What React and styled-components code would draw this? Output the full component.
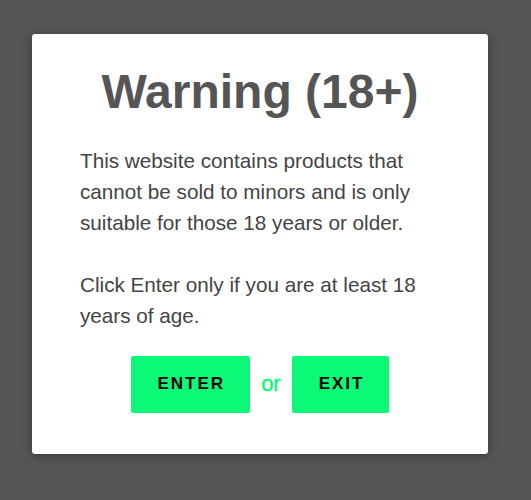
import React from "react";
import styled, { createGlobalStyle } from "styled-components";

const GlobalStyle = createGlobalStyle`
  html, body {
    margin: 0;
    padding: 0;
    background: #555555;
  }
  body {
    font-family: "Liberation Sans", Arial, Helvetica, sans-serif;
  }
`;

const Overlay = styled.div`
  min-height: 100vh;
  padding-top: 34px;
  padding-left: 32px;
  box-sizing: border-box;
`;

const Modal = styled.div`
  width: 456px;
  box-sizing: border-box;
  background: #fff;
  border-radius: 3px;
  box-shadow: 0 2px 10px rgba(0, 0, 0, 0.35);
  padding: 29px 48px 41px;
  display: flex;
  flex-direction: column;
`;

const Title = styled.h1`
  margin: 0 0 24px;
  font-size: 48px;
  line-height: 1.2;
  font-weight: 700;
  color: #555;
  text-align: center;
`;

const Text = styled.p`
  margin: 0 0 31px;
  font-size: 20.7px;
  line-height: 31px;
  color: #444;
  &:last-of-type {
    margin-bottom: 25px;
  }
`;

const Actions = styled.div`
  display: flex;
  justify-content: center;
  align-items: center;
  gap: 11px;
`;

const Button = styled.button`
  height: 57px;
  padding: 0 25px 0 27px;
  border: 0;
  border-radius: 2px;
  background: #0bf977;
  color: #000;
  font-family: inherit;
  font-size: 17px;
  font-weight: 700;
  letter-spacing: 2px;
  cursor: pointer;
`;

const Or = styled.span`
  color: #0bf977;
  font-size: 22px;
  -webkit-text-stroke: 0.4px #0bf977;
`;

export default function App() {
  return (
    <>
      <GlobalStyle />
      <Overlay>
        <Modal>
          <Title>Warning (18+)</Title>
          <Text>
            This website contains products that cannot be sold to minors and is
            only suitable for those 18 years or older.
          </Text>
          <Text>Click Enter only if you are at least 18 years of age.</Text>
          <Actions>
            <Button>ENTER</Button>
            <Or>or</Or>
            <Button>EXIT</Button>
          </Actions>
        </Modal>
      </Overlay>
    </>
  );
}
